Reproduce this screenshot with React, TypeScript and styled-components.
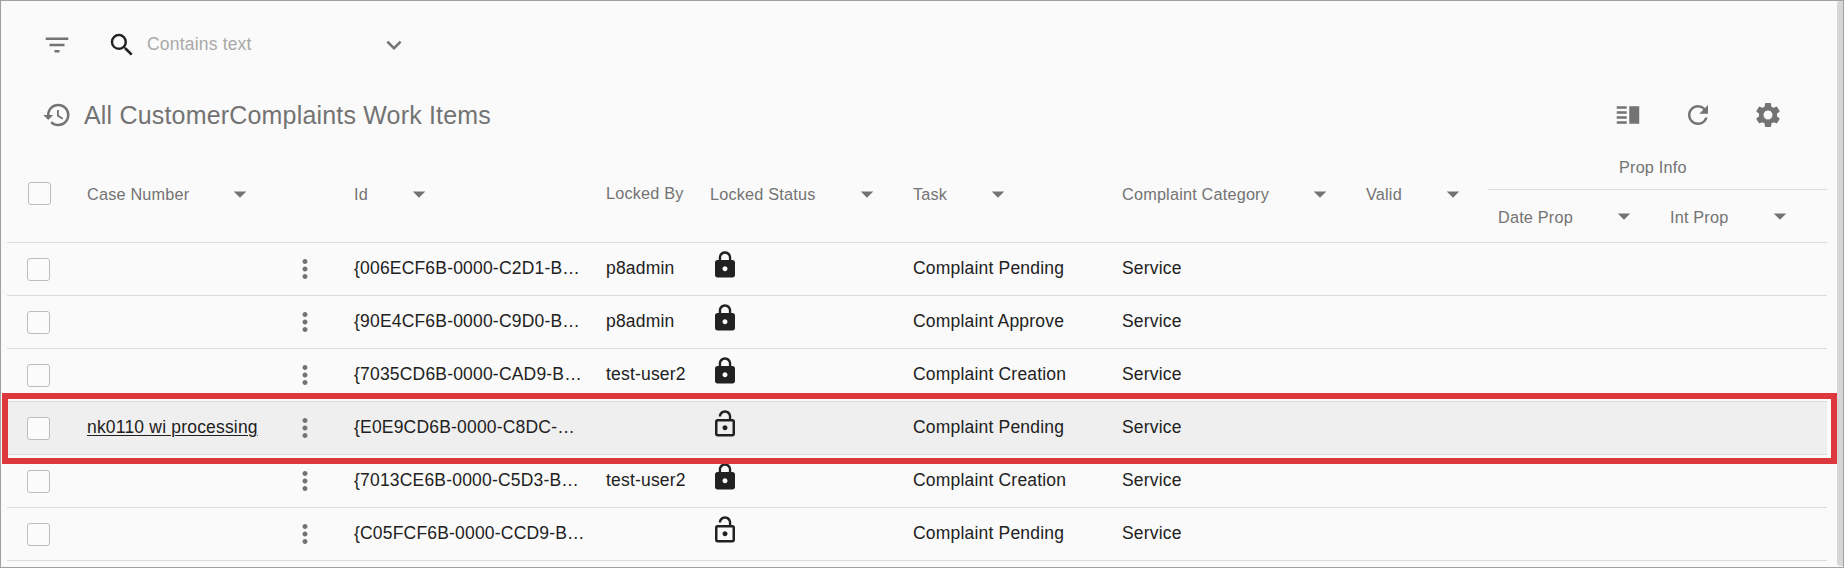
import React from 'react';
import styled, { createGlobalStyle } from 'styled-components';
import {
  MdArrowDropDown,
  MdExpandMore,
  MdFilterList,
  MdHistory,
  MdLock,
  MdLockOpen,
  MdMoreVert,
  MdRefresh,
  MdSearch,
  MdSettings,
  MdVerticalSplit,
} from 'react-icons/md';

const COLUMNS = '68px 267px 252px 104px 203px 209px 244px 134px 170px 169px';

const GlobalStyle = createGlobalStyle`
  *, *::before, *::after { box-sizing: border-box; }
  body {
    margin: 0;
    background: #fafafa;
    font-family: "Liberation Sans", Arial, sans-serif;
    color: #212121;
  }
`;

const Frame = styled.main`
  position: relative;
  height: 568px;
  border: 1px solid #a0a0a0;
  background: #fafafa;
  overflow: hidden;
  svg { display: block; flex: none; }
`;

const FilterBar = styled.div`
  display: flex;
  align-items: center;
  height: 88px;
  padding-left: 41px;
  color: #737373;
`;

const SearchBox = styled.label`
  display: flex;
  align-items: center;
  margin-left: 35px;
  width: 302px;
  color: #212121;
`;

const SearchInput = styled.input`
  flex: 1;
  min-width: 0;
  margin-left: 10px;
  padding: 0 0 2px;
  border: 0;
  background: none;
  outline: none;
  font: 17.5px "Liberation Sans", Arial, sans-serif;
  letter-spacing: 0.19px;
  &::placeholder { color: #a9a9a9; opacity: 1; }
`;

const ExpandIcon = styled(MdExpandMore)`
  color: #737373;
`;

const TitleBar = styled.header`
  display: flex;
  align-items: center;
  height: 52px;
  padding: 0 60px 0 41px;
  color: #737373;
`;

const Title = styled.h1`
  margin: 0 auto 0 12px;
  font-size: 25px;
  font-weight: 400;
  letter-spacing: 0.18px;
  line-height: 32px;
`;

const Actions = styled.div`
  display: flex;
  gap: 40px;
`;

const IconButton = styled.button`
  display: flex;
  padding: 0;
  border: 0;
  background: none;
  color: #737373;
`;

const Table = styled.section`
  width: 1820px;
  margin: 4px 0 0 6px;
`;

const HeadRow = styled.div`
  display: grid;
  grid-template-columns: ${COLUMNS};
  grid-template-rows: 45px 52px;
  border-bottom: 1px solid #dcdcdc;
  color: #737373;
  font-size: 16.25px;
  letter-spacing: 0.19px;
  white-space: nowrap;
`;

const HeadCell = styled.div<{ $end?: number; $grouped?: boolean; $start?: number }>`
  display: flex;
  align-items: center;
  justify-content: space-between;
  grid-row: ${(p) => (p.$grouped ? '2' : '1 / 3')};
  padding: 0 ${(p) => p.$end ?? 0}px 0 ${(p) => p.$start ?? 12}px;
`;

const HeadLabel = styled.span<{ $plain?: boolean }>`
  padding-top: ${(p) => (p.$plain ? 0 : 2)}px;
`;

const GroupCell = styled.div`
  grid-area: 1 / 9 / 2 / 11;
  display: flex;
  align-items: center;
  padding-left: 131px;
  border-bottom: 1px solid #dcdcdc;
`;

const CheckCell = styled.div<{ $head?: boolean }>`
  grid-row: ${(p) => (p.$head ? '1 / 3' : 'auto')};
  display: flex;
  align-items: center;
  padding: ${(p) => (p.$head ? '0 0 0 21px' : '1px 0 0 20px')};
`;

const Checkbox = styled.input.attrs({ type: 'checkbox' })`
  appearance: none;
  width: 23px;
  height: 23px;
  margin: 0;
  border: 1px solid #bdbdbd;
  border-radius: 3px;
  background: #fbfbfb;
`;

const Row = styled.div<{ $active?: boolean }>`
  display: grid;
  grid-template-columns: ${COLUMNS};
  height: 53px;
  border-bottom: 1px solid #dcdcdc;
  background: ${(p) => (p.$active ? '#efefef' : 'transparent')};
  font-size: 17.5px;
  letter-spacing: 0.19px;
`;

const Cell = styled.div`
  display: flex;
  align-items: center;
  padding: 0 0 2px 12px;
  white-space: nowrap;
`;

const CaseCell = styled(Cell)`
  justify-content: space-between;
  padding-right: 22px;
`;

const CaseLink = styled.a`
  text-decoration: underline;
  text-decoration-thickness: 1px;
  text-underline-offset: 2px;
  text-decoration-skip-ink: auto;
`;

const MenuButton = styled(IconButton)`
  margin: 2px 0 0 auto;
`;

const LockCell = styled(Cell)`
  align-items: flex-start;
  padding-top: 7px;
`;

const Highlight = styled.div`
  position: absolute;
  left: 1px;
  top: 392px;
  width: 1835px;
  height: 71px;
  border: 6px solid #de383f;
  pointer-events: none;
`;

const ScrollThumb = styled.div`
  position: absolute;
  right: 0;
  top: 0;
  width: 6px;
  height: 565px;
  border-radius: 3px 0 0 3px;
  background: #d6d6d6;
`;

interface WorkItem {
  name?: string;
  id: string;
  lockedBy?: string;
  task: string;
}

const items: WorkItem[] = [
  { id: '{006ECF6B-0000-C2D1-B…', lockedBy: 'p8admin', task: 'Complaint Pending' },
  { id: '{90E4CF6B-0000-C9D0-B…', lockedBy: 'p8admin', task: 'Complaint Approve' },
  { id: '{7035CD6B-0000-CAD9-B…', lockedBy: 'test-user2', task: 'Complaint Creation' },
  { name: 'nk0110 wi processing', id: '{E0E9CD6B-0000-C8DC-…', task: 'Complaint Pending' },
  { id: '{7013CE6B-0000-C5D3-B…', lockedBy: 'test-user2', task: 'Complaint Creation' },
  { id: '{C05FCF6B-0000-CCD9-B…', task: 'Complaint Pending' },
];

interface SortHeadProps {
  label: string;
  end: number;
  start?: number;
  grouped?: boolean;
}

function SortHead({ label, end, start, grouped }: SortHeadProps) {
  return (
    <HeadCell $end={end} $start={start} $grouped={grouped}>
      <HeadLabel>{label}</HeadLabel>
      <MdArrowDropDown size={30} />
    </HeadCell>
  );
}

export default function App() {
  return (
    <>
      <GlobalStyle />
      <Frame>
        <FilterBar>
          <MdFilterList size={30} />
          <SearchBox>
            <MdSearch size={30} />
            <SearchInput placeholder="Contains text" />
            <ExpandIcon size={30} />
          </SearchBox>
        </FilterBar>
        <TitleBar>
          <MdHistory size={30} />
          <Title>All CustomerComplaints Work Items</Title>
          <Actions>
            <IconButton aria-label="Split view"><MdVerticalSplit size={30} /></IconButton>
            <IconButton aria-label="Refresh"><MdRefresh size={30} /></IconButton>
            <IconButton aria-label="Settings"><MdSettings size={30} /></IconButton>
          </Actions>
        </TitleBar>
        <Table>
          <HeadRow>
            <CheckCell $head><Checkbox aria-label="Select all" /></CheckCell>
            <SortHead label="Case Number" end={87} />
            <SortHead label="Id" end={160} />
            <HeadCell><HeadLabel $plain>Locked By</HeadLabel></HeadCell>
            <SortHead label="Locked Status" end={19} />
            <SortHead label="Task" end={97} />
            <SortHead label="Complaint Category" end={19} />
            <SortHead label="Valid" end={20} />
            <GroupCell>Prop Info</GroupCell>
            <SortHead label="Date Prop" start={10} end={19} grouped />
            <SortHead label="Int Prop" start={12} end={32} grouped />
          </HeadRow>
          {items.map((item) => (
            <Row key={item.id} $active={Boolean(item.name)}>
              <CheckCell><Checkbox aria-label="Select row" /></CheckCell>
              <CaseCell>
                {item.name && <CaseLink>{item.name}</CaseLink>}
                <MenuButton aria-label="More actions"><MdMoreVert size={30} /></MenuButton>
              </CaseCell>
              <Cell>{item.id}</Cell>
              <Cell>{item.lockedBy}</Cell>
              <LockCell>{item.lockedBy ? <MdLock size={30} /> : <MdLockOpen size={30} />}</LockCell>
              <Cell>{item.task}</Cell>
              <Cell>Service</Cell>
            </Row>
          ))}
        </Table>
        <ScrollThumb />
        <Highlight />
      </Frame>
    </>
  );
}
